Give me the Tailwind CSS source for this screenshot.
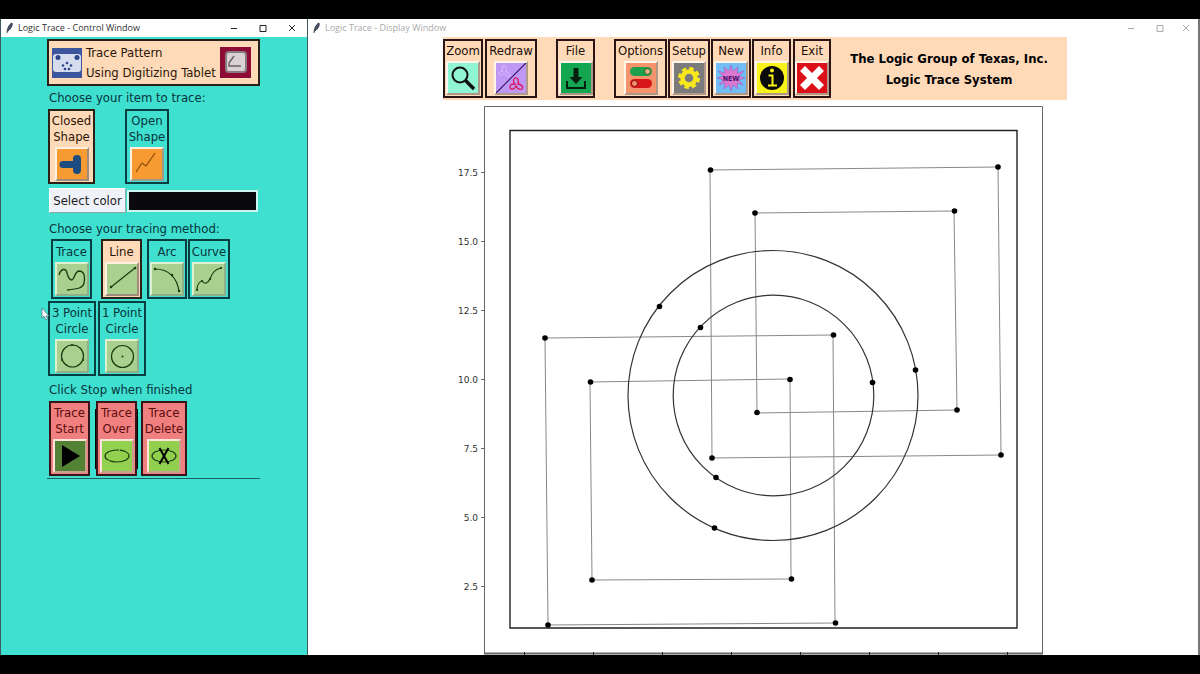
<!DOCTYPE html>
<html lang="en">
<head>
  <meta charset="UTF-8">
  <meta name="viewport" content="width=device-width, initial-scale=1.0">
  <title>Logic Trace</title>
  <script src="https://cdn.jsdelivr.net/npm/@tailwindcss/browser@4"></script>
</head>
<body class="bg-black min-h-screen flex flex-col py-[19px] text-[13px] leading-4 font-['DejaVu_Sans_Condensed','Noto_Sans',sans-serif]">

  <main class="flex flex-1 bg-gray-500">

    <!-- Control window -->
    <section class="w-[308px] shrink-0 flex flex-col bg-[#40e0d0] border-x border-[#3a5c60]">
      <header class="h-[18px] shrink-0 bg-white flex items-center text-[#333] text-[9px] font-['Open_Sans',sans-serif]">
        <svg class="w-3 h-3 ml-[3px]" viewBox="0 0 12 12"><path d="M3 11C3 7 5 2 8 1c1 2-1 6-4 8" fill="#47536e" stroke="#222" stroke-width=".7"/></svg>
        <h1 class="ml-[2px] flex-1">Logic Trace - Control Window</h1>
        <button aria-label="Minimize" class="w-[29px] flex justify-center"><svg class="w-2 h-2" viewBox="0 0 8 8" fill="none" stroke="#222"><path d="M1 4.500h6"/></svg></button>
        <button aria-label="Maximize" class="w-[29px] flex justify-center"><svg class="w-2 h-2" viewBox="0 0 8 8" fill="none" stroke="#222"><path d="M1 1.500h6v6H1z"/></svg></button>
        <button aria-label="Close" class="w-[30px] flex justify-center"><svg class="w-2 h-2" viewBox="0 0 8 8" fill="none" stroke="#222"><path d="M1 1l6 6M7 1L1 7"/></svg></button>
      </header>

      <div class="relative flex flex-col items-start pl-[46px] pt-[2px] text-[#06343b]">
        <button class="w-[213px] h-[47px] border-2 border-[#2b2018] bg-[#ffdab9] flex items-center px-[3px] text-left text-[#2a1608]">
          <svg class="w-[30px] h-[30px] shrink-0" viewBox="0 0 30 30">
            <path d="M0 0h30v30H0z" fill="#3c559c"/>
            <rect x="1" y="6" width="28" height="18" rx="3" fill="#d5dcee"/>
            <g fill="#2e458c"><circle cx="6" cy="9.500" r="2.500"/><circle cx="25" cy="9.500" r="2.500"/><circle cx="15" cy="15" r="1.300"/><circle cx="11" cy="17.500" r="1.300"/><circle cx="19" cy="17.500" r="1.300"/><circle cx="13" cy="21" r="1.300"/><circle cx="17" cy="21" r="1.300"/></g>
          </svg>
          <span class="flex-1 pl-1 leading-5 whitespace-nowrap">Trace Pattern<br>Using Digitizing Tablet</span>
          <svg class="w-[31px] h-[31px] shrink-0 mr-1" viewBox="0 0 31 31">
            <path d="M0 0h31v31H0z" fill="#8c0c36"/>
            <rect x="6" y="5" width="20" height="20" rx="3" fill="#d9d2d4" stroke="#8b7b80" stroke-width="2"/>
            <path d="M9 16l5-7M9 16v3h12" fill="none" stroke="#6d6266" stroke-width="1.500"/>
          </svg>
        </button>

        <h2 class="mt-1 ml-[2px]">Choose your item to trace:</h2>
        <div class="flex mt-[3px] ml-px">
          <button class="w-[47px] border-2 border-[#2b2018] bg-[#ffdab9] pt-[2px] pb-px flex flex-col items-center gap-[2px] text-[#2a1608]">
            <span>Closed<br>Shape</span>
            <svg class="w-[34px] h-[34px] border-2 border-t-[#fff0e0] border-l-[#fff0e0] border-r-[#a08c7c] border-b-[#a08c7c] bg-[#f79a32]" viewBox="0 0 30 30"><path d="M6 15.500H19" fill="none" stroke="#1c4c80" stroke-width="7" stroke-linecap="round"/><path d="M20 10v11" fill="none" stroke="#1c4c80" stroke-width="8" stroke-linecap="round"/></svg>
          </button>
          <button class="ml-[30px] w-11 border-2 border-[#063e42] pt-[2px] pb-px flex flex-col items-center gap-[2px]">
            <span>Open<br>Shape</span>
            <svg class="w-[34px] h-[34px] border-2 border-t-[#fff0e0] border-l-[#fff0e0] border-r-[#9a9c90] border-b-[#9a9c90] bg-[#f79a32]" viewBox="0 0 30 30"><path d="M4 23l6-9 4 3 9-13" fill="none" stroke="#8a4a08" stroke-width="1.200"/></svg>
          </button>
        </div>

        <div class="flex items-center mt-1 ml-[2px]">
          <button class="w-[77px] h-[25px] bg-[#f0f2fa] border border-t-white border-l-white border-r-[#8aa] border-b-[#8aa] text-[#1a1a1a]">Select color</button>
          <div role="img" aria-label="Current color" class="ml-px w-[131px] h-[22px] bg-[#0a0a0e] border-2 border-[#cff5f0]"></div>
        </div>

        <h2 class="mt-2 ml-[2px]">Choose your tracing method:</h2>
        <div class="flex mt-[2px] ml-1">
          <button class="w-[41px] border-2 border-[#063e42] pt-[3px] pb-px flex flex-col items-center gap-[2px]">
            <span>Trace</span>
            <svg class="w-[34px] h-[34px] border-2 border-t-[#dff0d0] border-l-[#dff0d0] border-r-[#8fae8a] border-b-[#8fae8a] bg-[#a9d08e]" viewBox="0 0 30 30" fill="none" stroke="#1c3c10" stroke-width="1.300"><path d="M2 11C4 4 9 4 10 9c1 4 2 7 5 7 3-1 2-8 7-9 6 0 6 7 5 12-1 5-6 6-17 7"/></svg>
          </button>
          <button class="ml-[9px] w-[41px] border-2 border-[#2b2018] bg-[#ffdab9] pt-[3px] pb-px flex flex-col items-center gap-[2px] text-[#2a1608]">
            <span>Line</span>
            <svg class="w-[34px] h-[34px] border-2 border-t-[#fff0e0] border-l-[#fff0e0] border-r-[#a08c7c] border-b-[#a08c7c] bg-[#a9d08e]" viewBox="0 0 30 30" fill="none" stroke="#1c3c10" stroke-width="1.200"><path d="M4 23L28 4"/><path d="M4 23h.1M28 4h.1" stroke-width="2.500" stroke-linecap="round"/></svg>
          </button>
          <button class="ml-[5px] w-10 border-2 border-[#063e42] pt-[3px] pb-px flex flex-col items-center gap-[2px]">
            <span>Arc</span>
            <svg class="w-[34px] h-[34px] border-2 border-t-[#dff0d0] border-l-[#dff0d0] border-r-[#8fae8a] border-b-[#8fae8a] bg-[#a9d08e]" viewBox="0 0 30 30" fill="none" stroke="#1c3c10" stroke-width="1.200"><path d="M3 5c14 0 22 9 24 22"/><path d="M3 5h.1M20 11h.1M27 27h.1" stroke-width="2.500" stroke-linecap="round"/></svg>
          </button>
          <button class="ml-px w-[42px] border-2 border-[#063e42] pt-[3px] pb-px flex flex-col items-center gap-[2px]">
            <span>Curve</span>
            <svg class="w-[34px] h-[34px] border-2 border-t-[#dff0d0] border-l-[#dff0d0] border-r-[#8fae8a] border-b-[#8fae8a] bg-[#a9d08e]" viewBox="0 0 30 30" fill="none" stroke="#1c3c10" stroke-width="1.200"><path d="M3 26c0-4 2-8 5-9 3 4 6 2 8-2 2-6 5-10 11-11"/><path d="M3 26h.1M8 17h.1M16 15h.1M27 4h.1" stroke-width="2.200" stroke-linecap="round"/></svg>
          </button>
        </div>
        <div class="flex gap-[2px] mt-[2px] ml-px">
          <button class="w-12 border-2 border-[#063e42] pt-[2px] pb-px flex flex-col items-center gap-[2px] whitespace-nowrap">
            <span>3 Point<br>Circle</span>
            <svg class="w-[34px] h-[34px] border-2 border-t-[#dff0d0] border-l-[#dff0d0] border-r-[#8fae8a] border-b-[#8fae8a] bg-[#a9d08e]" viewBox="0 0 30 30" fill="none" stroke="#1c3c10" stroke-width="1.200"><circle cx="15.500" cy="15" r="11"/><path d="M15 4h.1M26 19h.1M5 19h.1" stroke-width="2.200" stroke-linecap="round"/></svg>
          </button>
          <button class="w-12 border-2 border-[#063e42] pt-[2px] pb-px flex flex-col items-center gap-[2px] whitespace-nowrap">
            <span>1 Point<br>Circle</span>
            <svg class="w-[34px] h-[34px] border-2 border-t-[#dff0d0] border-l-[#dff0d0] border-r-[#8fae8a] border-b-[#8fae8a] bg-[#a9d08e]" viewBox="0 0 30 30" fill="none" stroke="#1c3c10" stroke-width="1.200"><circle cx="15.500" cy="15.500" r="11"/><circle cx="15.500" cy="15.500" r="1" fill="#1c3c10" stroke="none"/></svg>
          </button>
        </div>

        <h2 class="mt-[6px] ml-[2px]">Click Stop when finished</h2>
        <div class="flex mt-[3px] ml-[2px]">
          <button class="w-[41px] border-2 border-[#3a1418] bg-[#f08080] pt-[2px] pb-px flex flex-col items-center gap-[2px] text-[#5c0c0c]">
            <span>Trace<br>Start</span>
            <svg class="w-[34px] h-[34px] border-2 border-t-[#ffe4dc] border-l-[#ffe4dc] border-r-[#c8a090] border-b-[#c8a090] bg-[#548235]" viewBox="0 0 30 30"><path d="M7 4l18 11L7 26z" fill="#000"/></svg>
          </button>
          <div class="ml-[5px] flex items-center">
            <div class="w-px h-[60px] bg-black"></div>
            <button class="w-[41px] border-2 border-[#3a1418] bg-[#f08080] pt-[2px] pb-px flex flex-col items-center gap-[2px] text-[#5c0c0c]">
              <span>Trace<br>Over</span>
              <svg class="w-[34px] h-[34px] border-2 border-t-[#ffe4dc] border-l-[#ffe4dc] border-r-[#c8a090] border-b-[#c8a090] bg-[#92d050]" viewBox="0 0 30 30" fill="none" stroke="#1c3c10" stroke-width="1.200"><ellipse cx="15" cy="15" rx="12" ry="6" stroke-dasharray="22 1"/></svg>
            </button>
            <div class="w-px h-[60px] bg-black"></div>
          </div>
          <button class="ml-[3px] w-[46px] border-2 border-[#3a1418] bg-[#f08080] pt-[2px] pb-px flex flex-col items-center gap-[2px] text-[#5c0c0c]">
            <span>Trace<br>Delete</span>
            <svg class="w-[34px] h-[34px] border-2 border-t-[#ffe4dc] border-l-[#ffe4dc] border-r-[#c8a090] border-b-[#c8a090] bg-[#92d050]" viewBox="0 0 30 30" fill="none" stroke="#1c3c10"><ellipse cx="15" cy="15" rx="12" ry="6" stroke-width="1.200"/><path d="M10.500 7l9 16M19.500 7l-9 16" stroke="#000" stroke-width="2"/></svg>
          </button>
        </div>
        <hr class="w-[213px] mt-[2px] border-[#1a5f62]">

        <!-- mouse pointer -->
        <svg class="absolute left-10 top-[271px] w-[9px] h-[13px]" viewBox="0 0 9 13"><path d="M1 0v10l2-2 2 4 1.500-1-1.500-3h3z" fill="#fff" stroke="#567" stroke-width=".7"/></svg>
      </div>
    </section>

    <!-- Display window -->
    <section class="flex-1 min-w-0 flex flex-col bg-white border-r-2 border-[#777]">
      <header class="h-[18px] shrink-0 flex items-center text-[#aaa] text-[9px] font-['Open_Sans',sans-serif]">
        <svg class="w-3 h-3 ml-[3px]" viewBox="0 0 12 12"><path d="M3 11C3 7 5 2 8 1c1 2-1 6-4 8" fill="#47536e" stroke="#222" stroke-width=".7"/></svg>
        <h1 class="ml-[2px] flex-1">Logic Trace - Display Window</h1>
        <button aria-label="Minimize" class="w-[29px] flex justify-center"><svg class="w-2 h-2" viewBox="0 0 8 8" fill="none" stroke="#aaa"><path d="M1 4.500h6"/></svg></button>
        <button aria-label="Maximize" class="w-[29px] flex justify-center"><svg class="w-2 h-2" viewBox="0 0 8 8" fill="none" stroke="#aaa"><path d="M1 1.500h6v6H1z"/></svg></button>
        <button aria-label="Close" class="w-6 flex justify-center"><svg class="w-2 h-2" viewBox="0 0 8 8" fill="none" stroke="#aaa"><path d="M1 1l6 6M7 1L1 7"/></svg></button>
      </header>

      <div class="pl-1 flex justify-center">
      <div class="w-[624px] flex flex-col">
        <nav class="flex bg-[#ffdab9] py-[2px] text-[#1a0e08]">
          <button class="w-10 border-2 border-[#2b1414] pt-[2px] pb-px flex flex-col items-center gap-[2px]">
            <span>Zoom</span>
            <svg class="w-[34px] h-[34px] border-2 border-t-[#fff4ea] border-l-[#fff4ea] border-r-[#b09888] border-b-[#b09888] bg-[#8ff5d2]" viewBox="0 0 30 30" fill="none" stroke="#111"><circle cx="12" cy="12" r="7.500" stroke-width="2"/><path d="M17.500 17.500L26 26" stroke-width="3.500"/></svg>
          </button>
          <button class="ml-[2px] w-[52px] border-2 border-[#2b1414] pt-[2px] pb-px flex flex-col items-center gap-[2px]">
            <span>Redraw</span>
            <svg class="w-[34px] h-[34px] border-2 border-t-[#fff4ea] border-l-[#fff4ea] border-r-[#b09888] border-b-[#b09888] bg-[#bf97f5]" viewBox="0 0 30 30" fill="none"><path d="M7 3c3-1 4 3 3 6 3 0 5 2 3 4-2 1-4-1-5-3-2 3-5 3-5 1s2-3 4-3c-1-2-1-4 0-5z" stroke="#dcc0ff"/><path d="M19 15c3-1 4 3 3 6 3 0 6 3 4 5-3 1-5-1-6-3-2 4-6 4-6 1s2-3 5-3c-2-2-2-5 0-6z" stroke="#e01458" stroke-width="1.300"/><path d="M0 30L30 0" stroke="#30105c" stroke-width="1.200"/></svg>
          </button>
          <button class="ml-[19px] w-[39px] border-2 border-[#2b1414] pt-[2px] pb-px flex flex-col items-center gap-[2px]">
            <span>File</span>
            <svg class="w-[34px] h-[34px] border-2 border-t-[#fff4ea] border-l-[#fff4ea] border-r-[#b09888] border-b-[#b09888] bg-[#14a651]" viewBox="0 0 30 30"><path d="M12.500 5h5v9h4L15 21l-6.500-7h4z" fill="#06200f"/><path d="M6 18v7h18v-7" fill="none" stroke="#06200f" stroke-width="2"/></svg>
          </button>
          <button class="ml-[19px] w-[53px] border-2 border-[#2b1414] pt-[2px] pb-px flex flex-col items-center gap-[2px]">
            <span>Options</span>
            <svg class="w-[34px] h-[34px] border-2 border-t-[#fff4ea] border-l-[#fff4ea] border-r-[#b09888] border-b-[#b09888] bg-[#f4936c]" viewBox="0 0 30 30"><rect x="4" y="4" width="22" height="9" rx="4.500" fill="#1fa04c"/><circle cx="21.500" cy="8.500" r="3" fill="#e0b07c" stroke="#275c30"/><rect x="4" y="16" width="22" height="9" rx="4.500" fill="#d81818"/><circle cx="8.500" cy="20.500" r="3" fill="#f4936c" stroke="#7c1010"/></svg>
          </button>
          <button class="ml-px w-[42px] border-2 border-[#2b1414] pt-[2px] pb-px flex flex-col items-center gap-[2px]">
            <span>Setup</span>
            <svg class="w-[34px] h-[34px] border-2 border-t-[#fff4ea] border-l-[#fff4ea] border-r-[#b09888] border-b-[#b09888] bg-[#7b7b7b]" viewBox="0 0 30 30"><circle cx="15" cy="15" r="6.500" fill="none" stroke="#f7e71c" stroke-width="4.500"/><circle cx="15" cy="15" r="9.500" fill="none" stroke="#f7e71c" stroke-width="3" stroke-dasharray="4.400 3.060"/></svg>
          </button>
          <button class="ml-px w-10 border-2 border-[#2b1414] pt-[2px] pb-px flex flex-col items-center gap-[2px]">
            <span>New</span>
            <svg class="w-[34px] h-[34px] border-2 border-t-[#fff4ea] border-l-[#fff4ea] border-r-[#b09888] border-b-[#b09888] bg-[#72bdf5]" viewBox="0 0 30 30"><path d="M15 2l2 6 5-4-1 6 7-2-5 5 6 2-6 2 4 5-6-2 1 6-5-4-2 6-2-6-5 4 1-6-6 2 4-5-6-2 6-2-5-5 7 2-1-6 5 4z" fill="#dc78d0" stroke="#8868c8" stroke-width=".6"/><text x="15" y="18" text-anchor="middle" font-size="7" font-weight="bold" fill="#48106c">NEW</text></svg>
          </button>
          <button class="ml-px w-[39px] border-2 border-[#2b1414] pt-[2px] pb-px flex flex-col items-center gap-[2px]">
            <span>Info</span>
            <svg class="w-[34px] h-[34px] border-2 border-t-[#fff4ea] border-l-[#fff4ea] border-r-[#b09888] border-b-[#b09888] bg-[#f9f31a]" viewBox="0 0 30 30"><circle cx="15" cy="15" r="12" fill="#0a0a0a"/><circle cx="15" cy="7.500" r="2" fill="#f9f31a"/><path d="M11.500 12.500h4v10M11 22.500h9" fill="none" stroke="#f9f31a" stroke-width="2"/></svg>
          </button>
          <button class="ml-[2px] w-[38px] border-2 border-[#2b1414] pt-[2px] pb-px flex flex-col items-center gap-[2px]">
            <span>Exit</span>
            <svg class="w-[34px] h-[34px] border-2 border-t-[#fff4ea] border-l-[#fff4ea] border-r-[#b09888] border-b-[#b09888] bg-[#dc1018]" viewBox="0 0 30 30"><path d="M8 8l14 14M22 8L8 22" stroke="#fff" stroke-width="7" stroke-linecap="square"/></svg>
          </button>
          <p class="flex-1 self-center text-center font-bold leading-[21px] text-black">The Logic Group of Texas, Inc.<br>Logic Trace System</p>
        </nav>

        <svg class="w-full font-['DejaVu_Sans',sans-serif]" viewBox="443 100 624 555" fill="none">
          <g stroke="#666">
            <path d="M484.500 654.500V106.500h558v548"/>
            <path d="M484.500 653.500h558" stroke-width="2"/>
            <path d="M481 172.500h4M481 241.500h4M481 310.500h4M481 379.500h4M481 448.500h4M481 517.500h4M481 586.500h4"/>
            <path d="M524.500 652v3M593.500 652v3M662.500 652v3M731.500 652v3M800.500 652v3M869.500 652v3M938.500 652v3M1007.500 652v3" stroke="#222"/>
          </g>
          <g fill="#333" font-size="9" text-anchor="end">
            <text x="478" y="176">17.5</text>
            <text x="478" y="245">15.0</text>
            <text x="478" y="314">12.5</text>
            <text x="478" y="383">10.0</text>
            <text x="478" y="452">7.5</text>
            <text x="478" y="521">5.0</text>
            <text x="478" y="590">2.5</text>
          </g>
          <path d="M510 130.500h507v497.500h-507z" stroke="#222" stroke-width="1.400"/>
          <g stroke="#888">
            <path d="M710 170L998 167L1001 455L712 458z"/>
            <path d="M755 213L954 211L957 410L757 413z"/>
            <path d="M545 338L833 335L835 623L548 625z"/>
            <path d="M590 382L790 379L791 579L592 580z"/>
          </g>
          <g stroke="#333" stroke-width="1.200">
            <circle cx="773" cy="395.500" r="145"/>
            <circle cx="773.500" cy="395.500" r="100.300"/>
          </g>
          <g fill="#000">
            <circle cx="710.500" cy="170" r="2.800"/><circle cx="998" cy="167" r="2.800"/><circle cx="1001" cy="455" r="2.800"/><circle cx="712" cy="458" r="2.800"/>
            <circle cx="755" cy="213" r="2.800"/><circle cx="954.500" cy="211" r="2.800"/><circle cx="957" cy="410" r="2.800"/><circle cx="757" cy="412.500" r="2.800"/>
            <circle cx="545" cy="338" r="2.800"/><circle cx="833.500" cy="335" r="2.800"/><circle cx="835.500" cy="623" r="2.800"/><circle cx="548" cy="625" r="2.800"/>
            <circle cx="590.500" cy="382" r="2.800"/><circle cx="790" cy="379.500" r="2.800"/><circle cx="791.500" cy="579" r="2.800"/><circle cx="592" cy="580" r="2.800"/>
            <circle cx="659.500" cy="306.500" r="2.800"/><circle cx="915.500" cy="370" r="2.800"/><circle cx="714.500" cy="528" r="2.800"/>
            <circle cx="700.500" cy="327.500" r="2.800"/><circle cx="872.500" cy="382.500" r="2.800"/><circle cx="716" cy="477.500" r="2.800"/>
          </g>
        </svg>
      </div>
      </div>
    </section>

  </main>

</body>
</html>
